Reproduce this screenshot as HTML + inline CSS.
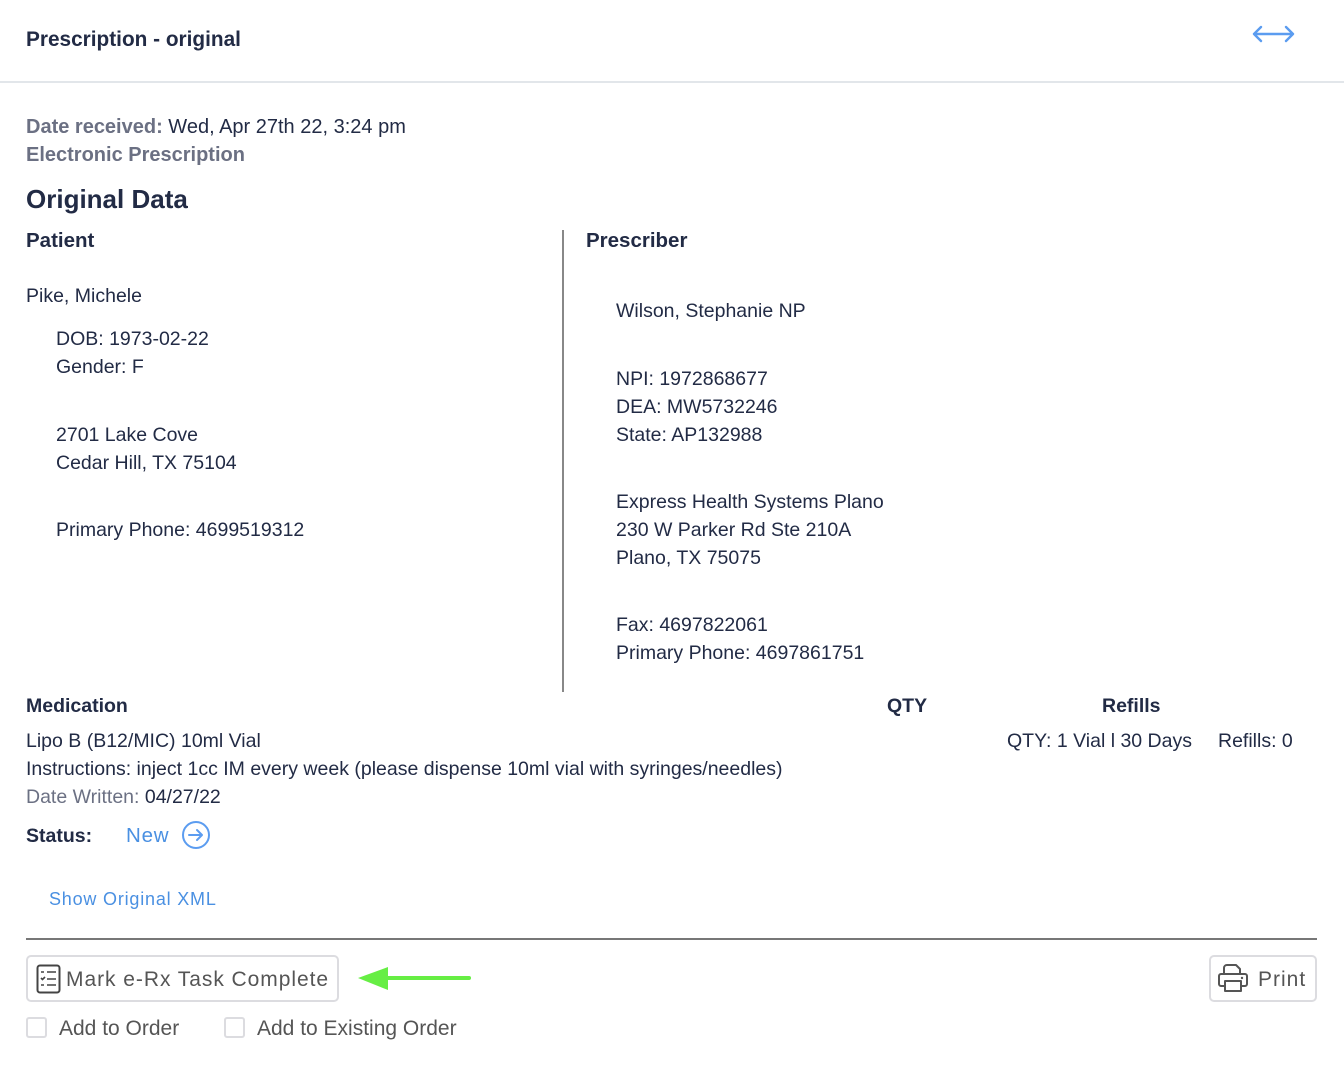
<!DOCTYPE html>
<html><head><meta charset="utf-8"><style>
*{margin:0;padding:0;box-sizing:border-box}
body{width:1344px;height:1076px;background:#fff;font-family:"Liberation Sans",sans-serif;color:#222b45;position:relative;overflow:hidden}
.a{position:absolute;white-space:nowrap;line-height:22px;font-size:19.5px}
.b{font-weight:bold}
.g{color:#6b7083}
.bl{color:#4a90e2}
</style></head><body>
<div class="a b" style="left:26px;top:29px;font-size:20.8px">Prescription - original</div>
<svg style="position:absolute;left:1252px;top:24px" width="44" height="20" viewBox="0 0 44 20"><path d="M2 10H41M9 3L2 10L9 17M34 3L41 10L34 17" fill="none" stroke="#5b9cf0" stroke-width="2.4" stroke-linecap="round" stroke-linejoin="round"/></svg>
<div style="position:absolute;left:0;top:81px;width:1344px;height:2px;background:#e2e6ea"></div>

<div class="a" style="left:26px;top:116px;font-size:20px"><span class="b g">Date received:</span> Wed, Apr 27th 22, 3:24 pm</div>
<div class="a b g" style="left:26px;top:144px;font-size:20px">Electronic Prescription</div>
<div class="a b" style="left:26px;top:185px;font-size:26px;line-height:28px">Original Data</div>

<div class="a b" style="left:26px;top:230px;font-size:20.5px">Patient</div>
<div class="a" style="left:26px;top:285px">Pike, Michele</div>
<div class="a" style="left:56px;top:328px">DOB: 1973-02-22</div>
<div class="a" style="left:56px;top:356px">Gender: F</div>
<div class="a" style="left:56px;top:424px">2701 Lake Cove</div>
<div class="a" style="left:56px;top:452px">Cedar Hill, TX 75104</div>
<div class="a" style="left:56px;top:519px">Primary Phone: 4699519312</div>

<div style="position:absolute;left:562px;top:230px;width:2px;height:462px;background:#888"></div>

<div class="a b" style="left:586px;top:230px;font-size:20.5px">Prescriber</div>
<div class="a" style="left:616px;top:300px">Wilson, Stephanie NP</div>
<div class="a" style="left:616px;top:368px">NPI: 1972868677</div>
<div class="a" style="left:616px;top:396px">DEA: MW5732246</div>
<div class="a" style="left:616px;top:424px">State: AP132988</div>
<div class="a" style="left:616px;top:491px">Express Health Systems Plano</div>
<div class="a" style="left:616px;top:519px">230 W Parker Rd Ste 210A</div>
<div class="a" style="left:616px;top:547px">Plano, TX 75075</div>
<div class="a" style="left:616px;top:614px">Fax: 4697822061</div>
<div class="a" style="left:616px;top:642px">Primary Phone: 4697861751</div>

<div class="a b" style="left:26px;top:695px">Medication</div>
<div class="a b" style="left:887px;top:695px">QTY</div>
<div class="a b" style="left:1102px;top:695px">Refills</div>
<div class="a" style="left:26px;top:730px">Lipo B (B12/MIC) 10ml Vial</div>
<div class="a" style="left:1007px;top:730px">QTY: 1 Vial l 30 Days</div>
<div class="a" style="left:1218px;top:730px">Refills: 0</div>
<div class="a" style="left:26px;top:758px">Instructions: inject 1cc IM every week (please dispense 10ml vial with syringes/needles)</div>
<div class="a" style="left:26px;top:786px"><span class="g">Date Written:</span> 04/27/22</div>

<div class="a b" style="left:26px;top:825px">Status:</div>
<div class="a bl" style="left:126px;top:825px;font-size:20.5px;letter-spacing:.8px">New</div>
<svg style="position:absolute;left:181px;top:821px" width="30" height="30" viewBox="0 0 30 30"><circle cx="15" cy="14" r="13" fill="none" stroke="#5b9cf0" stroke-width="2"/><path d="M8 14H21M16 9L21 14L16 19" fill="none" stroke="#5b9cf0" stroke-width="2" stroke-linecap="round" stroke-linejoin="round"/></svg>

<div class="a bl" style="left:49px;top:888px;font-size:18px;letter-spacing:.8px">Show Original XML</div>
<div style="position:absolute;left:26px;top:938px;width:1291px;height:2px;background:#777"></div>

<div style="position:absolute;left:26px;top:955px;width:313px;height:47px;border:2px solid #dcdce0;border-radius:5px"></div>
<svg style="position:absolute;left:36px;top:964px" width="26" height="30" viewBox="0 0 26 30"><rect x="1.5" y="1.5" width="22" height="27" rx="2.5" fill="none" stroke="#444" stroke-width="2"/><path d="M5 8h3M11 8h9M5 14l1.5 1.5L9 13M11 15h9M5 21h3M11 21h9" fill="none" stroke="#444" stroke-width="1.6"/></svg>
<div class="a" style="left:66px;top:969px;font-size:21px;color:#555;letter-spacing:.95px">Mark e-Rx Task Complete</div>
<svg style="position:absolute;left:356px;top:964px" width="116" height="30" viewBox="0 0 116 30"><path d="M30 14H113" stroke="#66ee44" stroke-width="4" stroke-linecap="round"/><path d="M2 14L32 3V26Z" fill="#66ee44"/></svg>

<div style="position:absolute;left:1209px;top:955px;width:108px;height:47px;border:2px solid #dcdce0;border-radius:5px"></div>
<svg style="position:absolute;left:1217px;top:964px" width="32" height="30" viewBox="0 0 32 30"><path d="M7 10V4a3 3 0 0 1 3-3h9l4 4v5M7 22H4a2 2 0 0 1-2-2v-8a2 2 0 0 1 2-2h24a2 2 0 0 1 2 2v8a2 2 0 0 1-2 2h-3M8 17h16v10H8z" fill="none" stroke="#555" stroke-width="2" stroke-linejoin="round"/><circle cx="25" cy="14" r="1.2" fill="#555"/></svg>
<div class="a" style="left:1258px;top:969px;font-size:21px;color:#555;letter-spacing:1px">Print</div>

<div style="position:absolute;left:26px;top:1017px;width:21px;height:21px;border:2px solid #dcdce0;border-radius:3px"></div>
<div class="a" style="left:59px;top:1018px;font-size:21px;color:#555">Add to Order</div>
<div style="position:absolute;left:224px;top:1017px;width:21px;height:21px;border:2px solid #dcdce0;border-radius:3px"></div>
<div class="a" style="left:257px;top:1018px;font-size:21px;color:#555">Add to Existing Order</div>
</body></html>
